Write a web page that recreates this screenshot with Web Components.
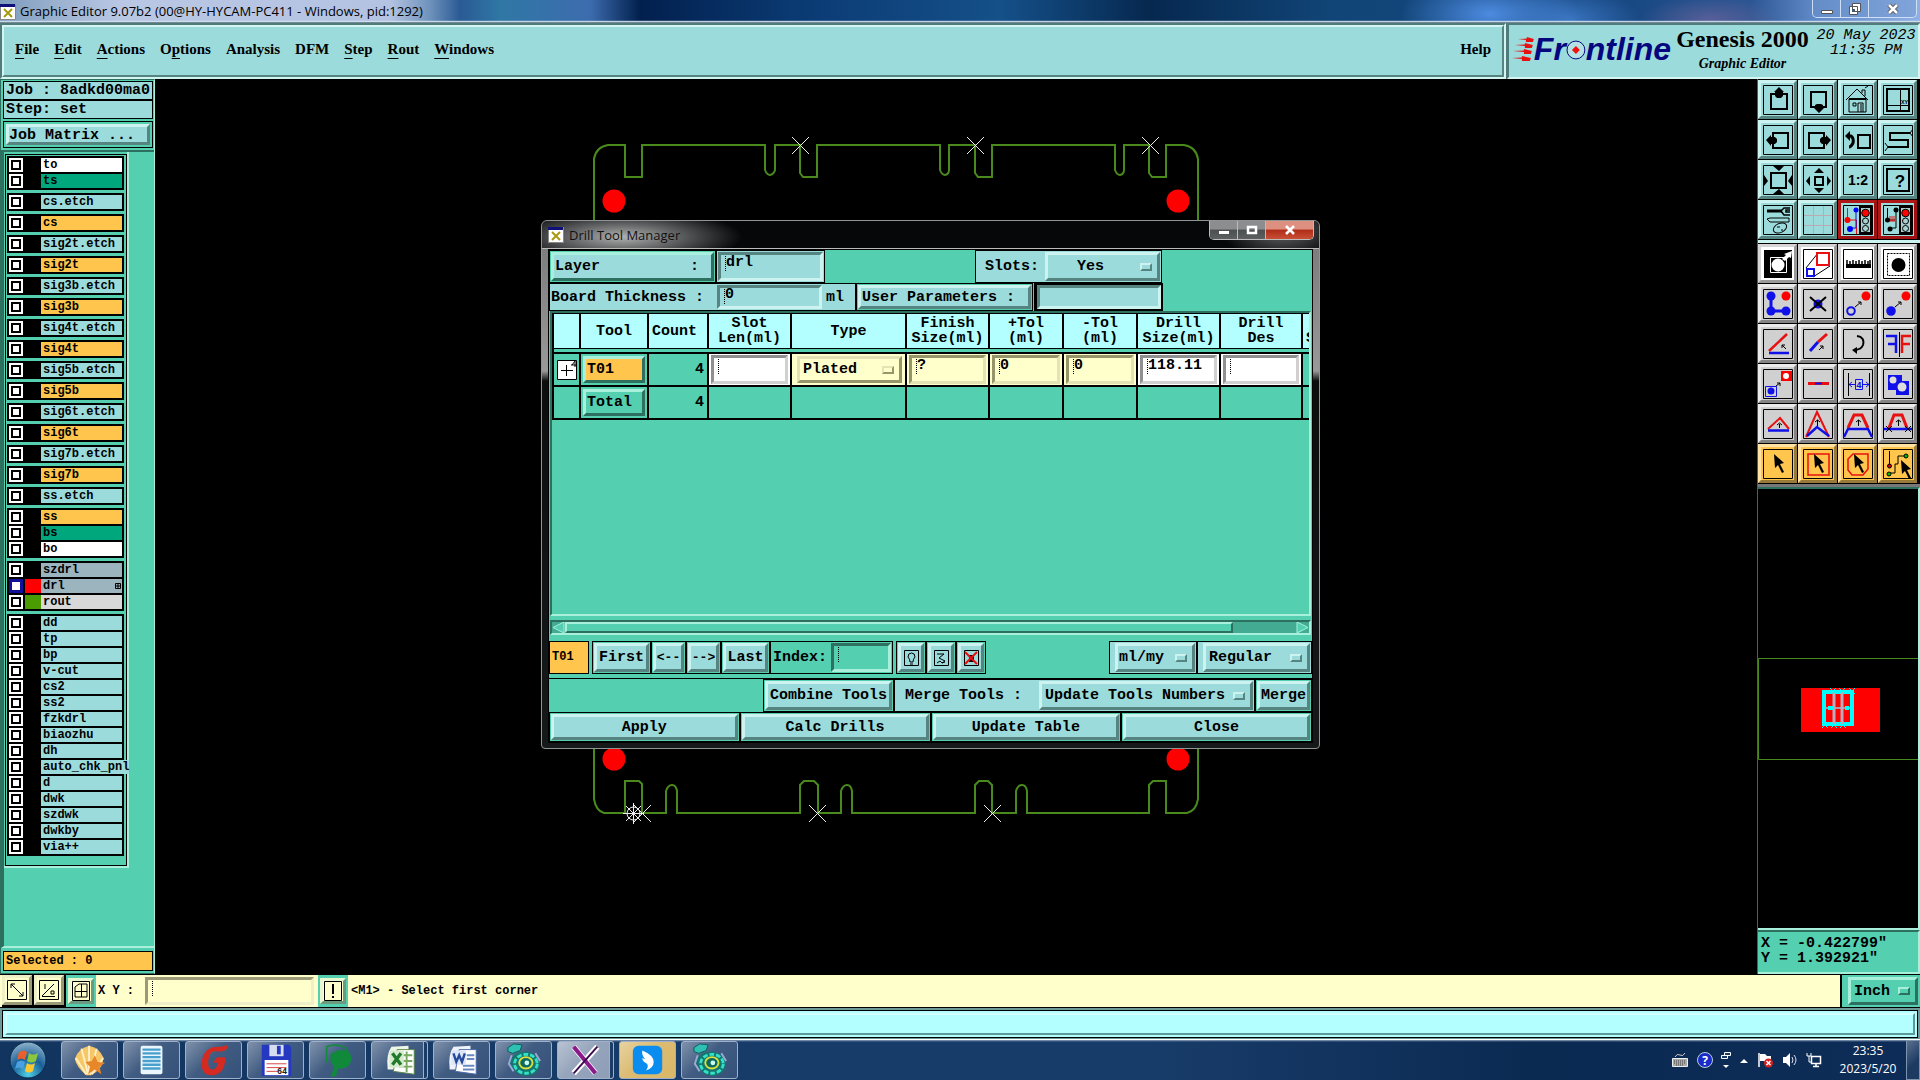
<!DOCTYPE html>
<html lang="en">
<head>
<meta charset="utf-8">
<title>Graphic Editor</title>
<style>
html, body { margin: 0; height: 100%; background: #000; overflow: hidden; }
body { font-family: "Liberation Mono", monospace; color: #000; }
</style>
</head>
<body>
<genesis-app></genesis-app>
<script>
const BASE = `
*, *::before, *::after { box-sizing: border-box; }
:host { display: block; }
svg { display: block; }
button, input, select { font: inherit; color: inherit; margin: 0; border-radius: 0; outline: 0; }
`;
function define(tag, css, html) {
  customElements.define(tag, class extends HTMLElement {
    constructor() {
      super();
      const t = document.createElement('template');
      t.innerHTML = '<style>' + BASE + css + '</style>' + (typeof html === 'function' ? html(this) : html);
      this.attachShadow({ mode: 'open' }).append(t.content.cloneNode(true));
    }
  });
}
const at = (el, n, d = '') => el.getAttribute(n) ?? d;

/* ---------- basic controls ---------- */
define('mo-button', `
:host { font-weight: bold; font-size: 15px; }
button { display: block; width: 100%; height: 100%; padding: 0 var(--pad, 4px); white-space: nowrap; overflow: hidden;
  text-align: var(--align, center); background: var(--face, #9cdbdb); border: 3px solid;
  border-color: var(--hi, #cdf3f1) var(--lo, #568481) var(--lo, #568481) var(--hi, #cdf3f1); }
`, el => `<button type="button" aria-label="${at(el, 'label', el.textContent.trim())}"><slot></slot></button>`);

define('mo-field', `
:host { display: flex; align-items: center; font-weight: bold; font-size: 15px; }
label { white-space: nowrap; }
input { flex: 1; min-width: 0; width: 100%; height: 100%; padding: 0 0 var(--drop, 9px) 5px; border: 3px solid;
  border-color: var(--lo, #568481) var(--hi, #cdf3f1) var(--hi, #cdf3f1) var(--lo, #568481);
  background: var(--caret, repeating-linear-gradient(#000 0 1px, transparent 1px 2px)) no-repeat 4px 1px / 1px 16px, var(--face, #9cdbdb); }
`, el => `<label for="f"><slot></slot></label><input id="f" type="text" ${el.hasAttribute('name') ? `aria-label="${at(el, 'name')}"` : ''} value="${at(el, 'value')}">`);

define('mo-select', `
:host { position: relative; font-weight: bold; font-size: 15px; }
select { display: block; appearance: none; width: 100%; height: 100%; padding: 0 0 0 var(--pad, 4px); border: 3px solid; background: var(--face, #9cdbdb);
  border-color: var(--hi, #cdf3f1) var(--lo, #568481) var(--lo, #568481) var(--hi, #cdf3f1); }
i { position: absolute; right: 8px; top: calc(50% - 4px); width: 12px; height: 8px; border: 2px solid; pointer-events: none;
  border-color: var(--hi, #cdf3f1) var(--lo, #568481) var(--lo, #568481) var(--hi, #cdf3f1); }
`, el => `<select aria-label="${at(el, 'name')}"><option>${at(el, 'value')}</option></select><i></i>`);

/* ---------- title bar ---------- */
const XICON = `<svg width="16" height="16" viewBox="0 0 16 16"><path d="M.5.5h15v15H.5z" fill="#fff" stroke="#888"/><path d="M0 0h15v3H0z" fill="#10107a"/><path d="M4 5l8 8M12 5l-8 8" stroke="#a89a10" stroke-width="2"/></svg>`;
define('app-title', `
:host { display: flex; align-items: center; height: 23px; gap: 4px; font: 13px "Open Sans", sans-serif;
 background: linear-gradient(#fff0 88%, #cfe2ee 94%, #456 100%), radial-gradient(ellipse 90px 40px at 1490px 14px, #4d8be0, #4d8be000), radial-gradient(ellipse 70px 34px at 1570px 20px, #4d8be0aa, #4d8be000), radial-gradient(ellipse 70px 24px at 1710px 20px, #73669eaa, #73669e00), linear-gradient(90deg, #7f9dbd 0, #b9c7e4 120px, #b4c3e2 390px, #6e92bb 430px, #2a5a94 460px, #2f77a5 500px, #3d6cae 590px, #02204e 640px, #0b3a73 800px, #155089 1000px, #06284f 1150px, #114577 1330px, #14457e 1600px, #2a5592 1750px, #5c86c4 1810px, #8fb0e4 100%); }
h1 { flex: 1; margin: 0; font: inherit; color: #000; padding-bottom: 2px; white-space: nowrap; }
div { display: flex; align-self: flex-start; height: 18px; margin-right: 3px; border: 1px solid #cfe0f6; border-top: 0; border-radius: 0 0 5px 5px; overflow: hidden; }
button { width: 28px; padding: 0; border: 0; border-right: 1px solid #cfe0f6; background: #6f95ce66; }
button:last-child { width: 47px; border: 0; } svg { margin: auto; } :host > svg { margin: 0; }
`, `${XICON}<h1>Graphic Editor 9.07b2 (00@HY-HYCAM-PC411 - Windows, pid:1292)</h1>
<div><button aria-label="Minimize"><svg width="14" height="12"><path d="M1.500 7.500h11v3h-11z" fill="#fff" stroke="#555"/></svg></button><button aria-label="Restore"><svg width="14" height="12"><path d="M4.500.5h8v8h-8zM1.500 3.500h8v8h-8z" fill="#fff" stroke="#555"/><path d="M4 6h3v3H4z" fill="#456"/></svg></button><button aria-label="Close"><svg width="14" height="12"><path d="M3 2l8 8M11 2l-8 8" stroke="#555" stroke-width="4.500"/><path d="M3 2l8 8M11 2l-8 8" stroke="#fff" stroke-width="2.500"/></svg></button></div>`);

/* ---------- menu and brand ---------- */
const RIDGE = `border: 2px solid; border-color: #4f7c7a #d5f5f3 #d5f5f3 #4f7c7a;`;
const RIDGE_IN = `border: 2px solid; border-color: #d5f5f3 #568481 #568481 #d5f5f3;`;
define('menu-bar', `
:host { flex: 1; ${RIDGE} background: #9cdbdb; }
nav { display: flex; height: 100%; align-items: center; gap: 15px; padding: 0 11px 4px; ${RIDGE_IN} font: bold 15px "Liberation Serif", serif; }
button { background: none; border: 0; padding: 0; }
button:last-child { margin-left: auto; }
u { text-underline-offset: 4px; text-decoration-thickness: 1px; }
`, `<nav><button><u>F</u>ile</button><button><u>E</u>dit</button><button><u>A</u>ctions</button><button>O<u>p</u>tions</button><button>Analysis</button><button>DFM</button><button><u>S</u>tep</button><button><u>R</u>out</button><button><u>W</u>indows</button><button>Help</button></nav>`);

define('brand-panel', `
:host { display: grid; grid-template-columns: 162px 1fr 104px; width: 413px; ${RIDGE} background: #9cdbdb; color: #000; }
.logo { display: flex; align-items: center; padding: 0 0 4px 3px; font: italic bold 32px/32px "Liberation Sans", sans-serif; color: #06067e; }
.name { display: flex; flex-direction: column; align-items: center; font: bold 24px/28px "Liberation Serif", serif; white-space: nowrap; }
.name em { font-size: 14px; line-height: 22px; }
.date { font: italic 15px/15px "Liberation Mono", monospace; text-align: center; padding-top: 3px; white-space: nowrap; }
`, `<div class="logo"><svg width="22" height="26" viewBox="0 0 22 26"><g fill="#e81010"><path d="M6 3l9-.5V1l7 2-1 3h-7V4z"/><path d="M3 9l10-.5V7l8 2-1 3h-7v-2z"/><path d="M1 15l11-.5V13l8 2-1 3h-7v-2z"/><path d="M0 22l10-.5V20l9 2-1 3H10v-2z"/></g></svg>Fr<svg width="20" height="24" viewBox="0 0 20 24"><circle cx="10" cy="13" r="9" fill="#b4e2e4" stroke="#06067e"/><path d="M10 9l4 4-4 4-4-4z" fill="#f01010"/></svg>ntline</div>
<div class="name"><span>Genesis 2000</span><em>Graphic Editor</em></div>
<div class="date">20 May 2023<br>11:35 PM</div>`);

/* ---------- layer panel ---------- */
define('layer-row', `
:host { display: grid; grid-template-columns: 14px 16px 1fr; column-gap: 2px; height: 16px; padding: 1px 0 1px 1px; background: #000; font: bold 12px/14px "Liberation Mono", monospace; }
input { appearance: none; width: 14px; height: 14px; border: 2px solid var(--box, #fff); background: #fff; box-shadow: inset 0 0 0 2px #000; }
:host([active]) input { box-shadow: inset 0 0 0 1px #10109a; --box: #10109a; }
span { background: var(--swatch, #000); }
label { background: var(--face); padding-left: 2px; margin: 0 1px 0 -2px; white-space: nowrap; }
svg { float: right; margin: 4px 1px 0; }
`, el => `<input type="checkbox" id="c"><span></span><label for="c">${at(el, 'name')}${el.hasAttribute('active') ? '<svg width="6" height="6"><path d="M.5.500h5v5h-5zM3 0v6M0 3h6" fill="none" stroke="#000"/></svg>' : ''}</label>`);
const C = { w: '#fff', g: '#00a67c', c: '#9cdbdb', o: '#ffc54c', s: '#9cb4bd', l: '#d8d8d8' };
const GROUPS = ['to:w ts:g', 'cs.etch:c', 'cs:o', 'sig2t.etch:c', 'sig2t:o', 'sig3b.etch:c', 'sig3b:o', 'sig4t.etch:c', 'sig4t:o', 'sig5b.etch:c', 'sig5b:o', 'sig6t.etch:c', 'sig6t:o', 'sig7b.etch:c', 'sig7b:o', 'ss.etch:c', 'ss:o bs:g bo:w', 'szdrl:s drl:s rout:l', 'dd:c tp:c bp:c v-cut:c cs2:c ss2:c fzkdrl:c biaozhu:c dh:c auto_chk_pnl:c d:c dwk:c szdwk:c dwkby:c via++:c'];
const SW = { drl: '--swatch:#f00', rout: '--swatch:#4a9c00' };
define('layer-panel', `
:host { display: flex; flex-direction: column; width: 155px; height: 895px; background: #54cfb0; font-weight: bold; font-size: 15px; border: 1px solid #2d7060; border-right-color: #a8f0dc; padding: 1px 1px 2px 2px; }
.box { border: 1px solid #000; background: #9cdbdb; height: 19px; line-height: 18px; padding-left: 2px; white-space: nowrap; }
.matrix { border: 1px solid #000; height: 27px; margin: 2px 0; padding: 2px; --align: left; --pad: 0; }
mo-button { height: 100%; }
.scroll { flex: 1; display: flex; border-top: 2px solid #2d7060; border-bottom: 2px solid #a8f0dc; margin: 0 -1px 3px -2px; border-left: 3px solid #2d7060; }
.list { align-self: flex-start; width: 125px; border: solid #a8f0dc; border-width: 0 2px 2px 0; padding: 2px 0 0 1px; }
.frame { border: 1px solid #000; padding: 1px 2px 6px 1px; }
.group { border: 1px solid #000; margin-bottom: 3px; }
.sel { background: #ffc54c; font-size: 12px; height: 20px; }
`, `<div class="box">Job : 8adkd00ma0</div><div class="box">Step: set</div>
<div class="matrix"><mo-button>Job Matrix ...</mo-button></div>
<div class="scroll"><div class="list"><div class="frame">${GROUPS.map(g => '<div class="group">' + g.split(' ').map(r => { const [n, c] = r.split(':'); return `<layer-row name="${n}" ${n === 'drl' ? 'active' : ''} style="--face:${C[c]};${SW[n] || ''}"></layer-row>`; }).join('') + '</div>').join('')}</div></div></div>
<div class="box sel">Selected : 0</div>`);

/* ---------- tool palette ---------- */
const K = 'fill="none" stroke="#000"', R = 'fill="none" stroke="#e81010"', B = 'fill="none" stroke="#1010e8"';
const F = `<path d="M.5.500h29v29H.5z" ${K}/>`;
const CUR = '<path d="M11 5l10 9-4 1 4 8-2 1-4-8-3 3z"/>';
const sarrow = (a, b, c, d) => `<path d="M${a} ${b}L${c} ${d}M${c - 3} ${d}h3v3" ${K}/>`;
const ICONS = [
 ['Pan up', F + `<path d="M8 9h16v15H8z" ${K} stroke-width="2"/><path d="M16 2l5 5h-1v4l-2 2h-4l-2-2V7h-1z"/>`],
 ['Pan down', F + `<path d="M8 7h15v15H8z" ${K} stroke-width="2"/><path d="M16 28l5-5h-1v-3l-2-1h-4l-2 1v3h-1z"/>`],
 ['Home', F + `<path d="M3 15L14 4l11 11M6 14v13h17V14zM19 8V5h3v6M10 18h3v3h-3zM15 27v-9h5v9M18 19v8M22 3l3-2" ${K}/><path d="M6 14h17" ${K} stroke-width="2"/>`],
 ['Origin', F + `<path d="M4 4h22v22H4z" ${K} stroke-width="2"/><path d="M17.500 4v22M4 20.500h22" ${K}/><text x="18" y="19" font-size="6" font-weight="bold">XY</text>`],
 ['Pan left', F + `<path d="M10 8h15v15H10z" ${K} stroke-width="2"/><path d="M3 15l5-5v2h4l2 2v3l-2 2H8v2z"/>`],
 ['Pan right', F + `<path d="M6 8h15v15H6z" ${K} stroke-width="2"/><path d="M28 15l-5-5v2h-4l-2 2v3l2 2h4v2z"/>`],
 ['Previous view', F + `<path d="M15 10h12v13H15z" ${K} stroke-width="2"/><path d="M4 11h4q3 2 2 7-2 4-4 4" ${K} stroke-width="3"/><path d="M2 11l5-5v10z"/>`],
 ['Snake', F + `<path d="M27 8H7v7h18v7H5" ${K} stroke-width="2"/><path d="M30 4l-3 4 3 4M2 18l3 4-3 4" ${K}/>`],
 ['Zoom in', F + `<path d="M8 8h15v15H8z" ${K} stroke-width="2"/><path d="M10 1h11l-5 5zM10 29h11l-5-5zM1 10v11l4-5zM29 10v11l-4-5z"/>`],
 ['Zoom out', F + `<path d="M12 12h8v8h-8z" ${K} stroke-width="2"/><path d="M11 8l5-5 5 5zM11 23l5 5 5-5zM7 11v10l-4-5zM24 11v10l4-5z"/>`],
 ['Scale', F + `<text x="15" y="20" font-size="14" font-weight="bold" font-family="Liberation Sans" text-anchor="middle">1:2</text>`],
 ['Help', F + `<path d="M4 4h22v22H4z" ${K} stroke-width="2"/><text x="17" y="22" font-size="17" font-weight="bold" font-family="Liberation Sans" text-anchor="middle">?</text>`],
 ['Tools', F + `<path d="M4 6h15" ${K} stroke-width="3"/><path d="M27 3h-6l-3 3 3 4h6M27 5h-4v2h4" ${K} stroke-width="1.500"/><path d="M4 14l3-1h19v4H7z" ${K}/><ellipse cx="17" cy="23" rx="7" ry="4.500" ${K} transform="rotate(-25 17 23)"/><path d="M14 22h3M18 25h2" ${K}/>`],
 ['Grid', F + `<path d="M10.500 1v28M20.500 1v28M1 10.500h28M1 20.500h28" fill="none" stroke="#b9aab4"/>`],
 ['Connections red', F + `<path d="M4.500 3v12h9v14" ${R}/><path d="M13 5v18H7" ${B}/><circle cx="4.500" cy="15" r="3" fill="#f00"/><circle cx="13" cy="5" r="2.500" fill="#00f"/><circle cx="7" cy="24" r="3" fill="#00f"/><path d="M17 2h11v26H17z" fill="#a9cfcf" stroke="#000" stroke-width="2"/><circle cx="22.500" cy="8" r="3.800" fill="#f00" stroke="#000"/><circle cx="22.500" cy="16" r="3" ${K}/><circle cx="22.500" cy="23.500" r="3" ${K}/>`, 'red'],
 ['Connections black', F + `<path d="M4.500 3v12M13 5v18H7M4 15h8" ${K}/><path d="M7 11v5M9 11v5M11 11v5M7 16h5" ${R}/><circle cx="4.500" cy="15" r="2.500"/><circle cx="13" cy="5" r="2.500"/><circle cx="7" cy="24" r="2.500"/><path d="M17 2h11v26H17z" fill="#a9cfcf" stroke="#000" stroke-width="2"/><circle cx="22.500" cy="8" r="3.800" fill="#f00" stroke="#000"/><circle cx="22.500" cy="16" r="3" ${K}/><circle cx="22.500" cy="23.500" r="3" ${K}/>`, 'red'],
 ['Select feature', `<path d="M1 1h28v28H1z"/><path d="M7.500 8.500h16v15h-16z" fill="none" stroke="#fff"/><circle cx="15" cy="16" r="6.500" fill="#fff"/><path d="M19 10l4-4-2-1 8-3-1 7-2-1-4 4z" fill="#fff"/>`, 'white'],
 ['Scale feature', F + `<path d="M3 19L15 4M10 28l17-11" ${K}/><path d="M14 4h12v12H14z" ${R} stroke-width="2"/><path d="M4 20h7v7H4z" ${B} stroke-width="2"/>`, 'white'],
 ['Measure', F + `<path d="M3 15h25v4H3z"/><path d="M4 11v5M7 12v3M10 11v5M13 12v3M16 11v5M19 12v3M22 11v5M25 12v3M27 11v5" ${K} stroke-width="1.500"/>`, 'white'],
 ['Select region', F + `<path d="M4.500 4.500h22v22h-22z" ${K} stroke-dasharray="2 1"/><circle cx="15.500" cy="16" r="7"/>`, 'white'],
 ['Add line', F + `<path d="M8 7v15h15" ${B} stroke-width="3"/><g fill="#1010e8"><circle cx="8" cy="7" r="4.500"/><circle cx="8" cy="22" r="4.500"/><circle cx="23" cy="22" r="4.500"/></g><circle cx="23" cy="7" r="4.500" fill="#f00"/>`],
 ['Delete', F + `<circle cx="15" cy="15" r="4.500" fill="#1010e8"/><path d="M7 8l16 14M23 8L7 22" ${K} stroke-width="2"/>`],
 ['Move', F + `<circle cx="8" cy="22" r="3.800" ${B} stroke-width="2"/><circle cx="23" cy="7" r="4.500" fill="#f00"/>` + sarrow(12, 18, 18, 13)],
 ['Copy', F + `<circle cx="8" cy="22" r="4.800" fill="#1010e8"/><circle cx="23" cy="7" r="4.500" fill="#f00"/>` + sarrow(12, 18, 18, 13)],
 ['Angle', F + `<path d="M6 22L24 5" ${R} stroke-width="2.500"/><path d="M6 24h20" ${B} stroke-width="2.500"/><path d="M23 20l-4-4M22 16h-3v3" ${K}/>`],
 ['Stretch', F + `<path d="M15 13l9-8" ${R} stroke-width="3"/><path d="M7 22l8-9" ${B} stroke-width="3"/>` + sarrow(16, 21, 20, 17)],
 ['Rotate', F + `<path d="M14 7q8 1 6 9-2 5-9 5" ${K} stroke-width="2"/><path d="M9 21l5-3v7z"/>`],
 ['Mirror', F + `<path d="M3 7h10v17M5 15h8" ${B} stroke-width="2.500"/><path d="M16.500 3v25" ${K}/><path d="M28 7h-9v17M27 15h-8" ${R} stroke-width="2.500"/>`],
 ['Transform', F + `<path d="M18 2h11v10H18z" fill="#f00"/><circle cx="23" cy="7" r="3" fill="#fff"/><path d="M2.500 17.500h11v10h-11z" ${B}/><circle cx="8" cy="22" r="3.500" fill="#1010e8"/>` + sarrow(13, 17, 17, 14)],
 ['Break', F + `<path d="M5 14.500h21" ${R} stroke-width="3"/><path d="M12 14.500h7" ${B} stroke-width="2"/>`],
 ['Spacing', F + `<path d="M5.500 4v23M26.500 4v23" ${K}/><path d="M6 15.500h6M19 15.500h7M9 13l-3 2.500 3 2.500M23 13l3 2.500-3 2.500M12.500 10.500h7v10h-7z" ${B}/><text x="16" y="19" font-size="9" fill="#1010e8" text-anchor="middle">4</text>`],
 ['Surface', F + `<path d="M5 6h14v6h7v14H13v-5H5z" fill="#1010e8"/><circle cx="10" cy="11" r="3.500" fill="#ddd"/><circle cx="19" cy="18" r="4.500" fill="#ddd"/>`],
 ['Slide one', F + `<path d="M5 20L17 9l9 11" ${R} stroke-width="2"/><path d="M5 21.500h21" ${B} stroke-width="2.500"/><path d="M16.500 19v-4M14 16l2.500-2 2.500 2" ${K}/>`],
 ['Slide two', F + `<path d="M3 28L14 3l12 25" ${R} stroke-width="2"/><path d="M4 27l10-9 12 9" ${B} stroke-width="2.500"/><path d="M14.500 17v-6M12 13l2.500-2 2.500 2" ${K}/>`],
 ['Slide three', F + `<path d="M5 19l6-13h8l6 13" ${R} stroke-width="3"/><path d="M1 28l4-8h20l4 8" ${B} stroke-width="2.500"/><path d="M15.500 17v-6M13 13l2.500-2 2.500 2" ${K}/>`],
 ['Slide four', F + `<path d="M6 19l5-13h8l5 13" ${R} stroke-width="3"/><path d="M1 20h28" ${B} stroke-width="2.500"/><path d="M15.500 17v-6M13 13l2.500-2 2.500 2M3 17l6 6M9 17l-6 6M22 17l6 6M28 17l-6 6" ${K}/>`],
 ['Single select', F + CUR, 'orange'],
 ['Frame select', F + `<path d="M5 5h21v21H5z" ${R} stroke-width="1.500"/>` + CUR, 'orange'],
 ['Polygon select', F + `<path d="M10 5h15v15l-5 6H9l-4-5V10z" ${R} stroke-width="1.500"/>` + CUR, 'orange'],
 ['Net select', F + `<path d="M6.500 2v14M6 24h6v-9h3V7h8" ${K}/><circle cx="6.500" cy="17" r="2" fill="#c00" stroke="#000"/><circle cx="6" cy="25" r="2" fill="#0b0" stroke="#000"/><circle cx="23" cy="7" r="2" fill="#0b0" stroke="#000"/><g transform="translate(7 6)">${CUR}</g>`, 'orange'],
];
define('tool-palette', `
:host { display: grid; grid-template-columns: repeat(4, 39px); grid-auto-rows: 39px; gap: 1px; padding: 1px 0; background: #000; border-bottom: 3px solid var(--edge, #cdf3f1); }
mo-button { --pad: 0; }
.red { --hi: #b01818; --lo: #a01010; } .white { --face: #fff; --hi: #d6d6d6; --lo: #9a9a9a; }
.grey { --face: #d0d0d0; --hi: #ebebeb; --lo: #848484; } .orange { --face: #ffc54c; --hi: #ffe3a5; --lo: #9a7a38; }
svg { width: 30px; height: 30px; margin: auto; }
`, el => {
  const [a, b] = at(el, 'range').split('-').map(Number);
  return ICONS.slice(a, b).map(([n, s, c]) => `<mo-button label="${n}" class="${c || (a ? 'grey' : 'cyan')}"><svg viewBox="0 0 30 30">${s}</svg></mo-button>`).join('');
});
define('side-panel', `
:host { display: flex; flex-direction: column; width: 163px; height: 895px; border-left: 1px solid #2d7060; }
.map { flex: 1; min-height: 0; border: solid; border-width: 2px 2px 2px 0; border-color: #2d7060 #a8f0dc #a8f0dc; }
.map svg { width: 100%; height: 100%; }
.xy { height: 44px; padding: 4px 0 0 3px; font: bold 15px/15px "Liberation Mono", monospace; background: #54cfb0; border: solid; border-width: 2px 2px 2px 0; border-color: #2d7060 #a8f0dc #a8f0dc; white-space: pre; }
`, `<tool-palette range="0-16"></tool-palette><tool-palette range="16-40" style="--edge:#777"></tool-palette>
<div class="map"><svg viewBox="0 2 160 438" preserveAspectRatio="xMinYMin"><path d="M.5 171.500h170M.5 171.500v101h170" fill="none" stroke="#4a8a1c"/><path d="M43 201h79v44H43z" fill="#f00"/><g fill="none" stroke="#0ff"><path d="M66 205h28v32H66z" stroke-width="4"/><path d="M68 221h24" stroke="#a9a" stroke-width="2"/><path d="M76 205v32M84 205v32" stroke="#bab" stroke-width="3"/><path d="M70 221h5M87 221h4" stroke-width="4"/><path d="M72 201l6 6M78 201l-6 6M81 201l6 6M87 201l-6 6M91 201l6 6M97 201l-6 6M64 235l6 6M70 235l-6 6M73 235l6 6M79 235l-6 6M82 235l6 6M88 235l-6 6"/></g></svg></div>
<div class="xy">X = -0.422799"
Y = 1.392921"</div>`);

/* ---------- board drawing ---------- */
const xm = (x, y) => `M${x - 8.500} ${y - 8.500}l17 17M${x + 8.500} ${y - 8.500}l-17 17`;
define('board-canvas', `svg { width: 100%; height: 100%; }`,
`<svg viewBox="155 79 1602 894" preserveAspectRatio="xMinYMin"><g fill="none" stroke="#4a8a1c" stroke-width="2">
<path d="M594 400V159q2-12 14-14h17v32h17v-32h123v25q2 5 5 5 4-1 5-5v-25h25v28l3 4h14v-32h123v25q2 5 5 5 4-1 4-5v-25h26v28l3 4h14v-32h123v25q2 5 5 5 4-1 4-5v-25h25v28l3 4h14v-32h18q12 2 14 14v241"/>
<path d="M594 700v99q2 12 10 14h21v-32h14l3 3v29h24v-22q2-6 6-6 4 0 5 6v22h123v-28l4-4h10l4 4v28h23v-22q2-6 6-6 4 0 5 6v22h123v-28l4-4h9l4 4v28h24v-22q2-6 6-6 4 0 5 6v22h122v-28l4-4h13v32h21q9-2 11-14v-99"/></g>
<g fill="#f00"><circle cx="614" cy="201" r="11.500"/><circle cx="1178" cy="201" r="11.500"/><circle cx="614" cy="759" r="11.500"/><circle cx="1178" cy="759" r="11.500"/></g>
<g fill="none" stroke="#eee"><path d="${xm(800.5, 145.5)}${xm(975.5, 145.5)}${xm(1150.5, 145.5)}${xm(642.5, 813.5)}${xm(817.5, 813.5)}${xm(992.5, 813.5)}"/><circle cx="633.500" cy="813.500" r="6.500"/><path d="M623 813.500h21M633.500 803v21M626 806l15 15M641 806l-15 15"/></g></svg>`);

/* ---------- drill tool manager ---------- */
const bulb = `<svg width="15" height="16" viewBox="0 0 15 16"><path d="M.5.500h14v15H.5z" ${K}/>`;
define('drill-dialog', `
:host { border: 1px solid #8f9494; border-radius: 6px 6px 4px 4px; padding: 0 6px 5px; font-weight: bold; font-size: 15px; background: linear-gradient(#777 0, #999 150px, #0c0e0e 160px, #16191a 100%); color: #000; }
svg { margin: auto; }
header { display: flex; align-items: center; gap: 5px; height: 28px; margin: 0 -6px; padding-left: 6px; font: 13px "Open Sans", sans-serif; background: radial-gradient(ellipse 120px 28px at 80px 16px, #b0b0b0, #a9a9a900), radial-gradient(ellipse 60px 30px at 740px 10px, #666, #6660), #050709; border-bottom: 1px solid #bbb; border-radius: 5px 5px 0 0; color: #111; }
header > svg { margin: 0; }
h2 { font: inherit; margin: 0; flex: 1; }
.wb { display: flex; align-self: flex-start; height: 19px; margin-right: 5px; border: 1px solid #bbb; border-top: 0; border-radius: 0 0 5px 5px; overflow: hidden; }
.wb button { width: 28px; padding: 0; border: 0; border-right: 1px solid #bbb; background: linear-gradient(#8b8d8e 45%, #4c4f50 50%, #5d6061); }
.wb button:last-child { width: 47px; border: 0; background: linear-gradient(#dd8f80 45%, #b02c18 50%, #c85036); }
.client { background: #54cfb0; border: 1px solid #000; }
.row { display: flex; }
.row > * { flex: none; border: 1px solid #000; }
.row > .fill { flex: 1; border: 0; }
.cy { background: #9cdbdb; }
.gr { --face: #54cfb0; --hi: #a8f0dc; --lo: #2d7060; }
.pad { padding: 1px; } .pad > * { height: 100%; } .pad > .lbl { height: auto; }
.ye { --face: #ffffcc; --hi: #e3e3b4; --lo: #96966a; background: #ffffcc; }
.wh { --face: #fff; --hi: #d0d0d0; --lo: #909090; background: #fff; }
.scroller { height: 305px; overflow: hidden; border: 2px solid; border-color: #2d7060 #a8f0dc #a8f0dc #2d7060; margin: 0 1px; }
table { table-layout: fixed; width: 811px; border-spacing: 0; border-left: 2px solid #000; }
th { height: 36px; padding: 0; background: #b3ffff; line-height: 15px; border: solid #000; border-width: 1px 2px 1px 0; font-weight: bold; white-space: nowrap; }
th:nth-child(3) { text-align: left; padding-left: 3px; }
th:last-child { text-align: left; padding-left: 3px; }
tbody::before { content: ""; display: block; height: 3px; }
td { height: 33px; padding: 0; border: 0 solid #000; border-width: 0 2px 2px 0; }
tbody tr:first-child td { border-top-width: 2px; }
td > * { height: 31px; }
td > mo-field { padding: 1px 2px; }
td > .t { height: 27px; margin: 0 2px; --align: left; --pad: 1px; }
td.n { text-align: right; padding-right: 3px; }
.expand { display: block; width: 20px; height: 20px; padding: 0; margin: auto; border: 0; background: none; }
.small { font-size: 13px; }
.bar { display: flex; height: 15px; margin: 4px 1px 6px; background: #43ab91; border: 2px solid; border-color: #2d7060 #a8f0dc #a8f0dc #2d7060; }
.bar svg { margin: 0; }
.bar i { flex: 0 1 668px; border: 2px solid; border-color: #a8f0dc #2d7060 #2d7060 #a8f0dc; background: #54cfb0; }
.bar svg:last-child { margin-left: auto; }
`, `<header>${XICON}<h2>Drill Tool Manager</h2><div class="wb"><button aria-label="Minimize"><svg width="14" height="12"><path d="M2 7h10v3H2z" fill="#fff"/></svg></button><button aria-label="Maximize"><svg width="14" height="12"><path d="M3 3h8v6H3z" fill="none" stroke="#fff" stroke-width="2.500"/></svg></button><button aria-label="Close"><svg width="14" height="12"><path d="M3 2l8 8M11 2l-8 8" stroke="#fff" stroke-width="2.500"/></svg></button></div></header>
<div class="client">
<div class="row" style="height:33px"><div class="pad gr" style="width:167px;--face:#9cdbdb;--align:left;--pad:1px"><mo-button style="white-space:pre">Layer &nbsp; &nbsp; &nbsp; &nbsp; &nbsp;:</mo-button></div><div class="cy pad" style="width:109px"><mo-field name="Layer" value="drl"></mo-field></div><div class="fill" style="flex:0 0 150px"></div><div class="cy pad" style="width:187px;padding-left:9px;display:flex;align-items:center;gap:6px"><span class="lbl">Slots:</span><mo-select name="Slots" value="Yes" style="flex:1;--pad:29px"></mo-select></div></div>
<div class="row" style="height:28px"><div class="cy pad" style="width:307px;display:flex;align-items:center;gap:4px"><mo-field value="0" style="width:271px;--drop:6px"><span style="display:block;width:166px">Board Thickness :</span></mo-field><span class="lbl">ml</span></div><div class="pad" style="width:177px;background:#54cfb0;--align:left;--pad:1px"><mo-button>User Parameters :</mo-button></div><div style="width:130px;border:0;background:#000;padding:2px 2px 2px 3px;border-left:1px solid #54cfb0"><mo-field name="User parameters" value="" style="height:100%;--caret:linear-gradient(#0000,#0000)"></mo-field></div></div>
<div class="scroller"><table><colgroup>${[27, 68, 60, 83, 115, 83, 74, 74, 83, 82, 60].map(w => `<col style="width:${w}px">`).join('')}</colgroup>
<thead><tr><th></th><th>Tool</th><th>Count</th><th>Slot<br>Len(ml)</th><th>Type</th><th>Finish<br>Size(ml)</th><th>+Tol<br>(ml)</th><th>-Tol<br>(ml)</th><th>Drill<br>Size(ml)</th><th>Drill<br>Des</th><th><br>S</th></tr></thead>
<tbody><tr><td><button class="expand" aria-label="Expand"><svg width="20" height="20"><path d="M.5.500h19v19H.5z" fill="#fff" stroke="#000"/><path d="M4 10.500h12M9.500 5v11M14 5h5M15 5l3-4v6" ${K}/></svg></button></td><td><mo-button class="t gr" style="--face:#ffc54c">T01</mo-button></td><td class="n">4</td><td class="wh"><mo-field name="Slot length" value=""></mo-field></td><td class="ye"><mo-select name="Type" value="Plated" style="height:27px;margin:0 3px 0 5px;--pad:3px"></mo-select></td><td class="ye"><mo-field name="Finish size" value="?"></mo-field></td><td class="ye"><mo-field name="Plus tolerance" value="0"></mo-field></td><td class="ye"><mo-field name="Minus tolerance" value="0"></mo-field></td><td class="wh"><mo-field name="Drill size" value="118.11"></mo-field></td><td class="wh"><mo-field name="Drill designator" value=""></mo-field></td><td></td></tr>
<tr><td></td><td><mo-button class="t gr">Total</mo-button></td><td class="n">4</td><td></td><td></td><td></td><td></td><td></td><td></td><td></td><td></td></tr></tbody></table></div>
<div class="bar"><svg width="13" height="11"><path d="M12 0v11L1 5.500z" fill="#54cfb0" stroke="#a8f0dc"/></svg><i></i><svg width="13" height="11"><path d="M1 0v11l11-5.500z" fill="#54cfb0" stroke="#a8f0dc"/></svg></div>
<div class="row" style="height:33px;--pad:0"><div style="width:40px;background:#ffc54c;font-size:12px;line-height:31px;padding-left:2px;margin-right:3px">T01</div><div class="pad" style="width:59px"><mo-button>First</mo-button></div><div class="pad" style="width:35px"><mo-button class="small">&lt;--</mo-button></div><div class="pad" style="width:35px"><mo-button class="small">--&gt;</mo-button></div><div class="pad" style="width:49px"><mo-button>Last</mo-button></div><div class="pad" style="width:123px;margin-right:3px;padding-left:2px"><mo-field class="gr" value="" style="--face:#54cfb0"><span style="display:block;width:58px">Index:</span></mo-field></div><div class="pad" style="width:30px"><mo-button label="Highlight">${bulb}<path d="M6 12q0-3-2-5 0-4 3.500-4t3.500 4q-2 2-2 5zM6 14h3" ${K}/></svg></mo-button></div><div class="pad" style="width:30px"><mo-button label="Graph">${bulb}<path d="M3 4h7l-5 4 6 3-3 2M3 13l3-2 2 2 3-1" ${K}/></svg></mo-button></div><div class="pad" style="width:30px"><mo-button label="Clear highlight">${bulb}<path d="M5 5h5v7H5z"/><path d="M1 2l12 12M13 2L1 14" ${R} stroke-width="2"/></svg></mo-button></div><div class="fill"></div><div class="cy pad" style="width:88px;padding-left:5px"><mo-select name="Units" value="ml/my"  style="--pad:1px"></mo-select></div><div class="cy pad" style="width:115px;padding-left:5px"><mo-select name="Mode" value="Regular" style="--pad:3px"></mo-select></div></div>
<div class="row" style="height:34px;margin-top:4px;border-top:1px solid #000;--pad:0"><div class="fill"></div><div class="pad" style="width:131px"><mo-button>Combine Tools</mo-button></div><div class="cy pad" style="width:361px;padding-left:10px;display:flex;align-items:center;justify-content:space-between"><span class="lbl">Merge Tools :</span><mo-select name="Merge tools" value="Update Tools Numbers" style="width:214px;--pad:3px"></mo-select></div><div class="pad" style="width:57px"><mo-button>Merge</mo-button></div></div>
<div class="row" style="height:30px">${['Apply', 'Calc Drills', 'Update Table', 'Close'].map(t => `<div class="pad" style="flex:1"><mo-button>${t}</mo-button></div>`).join('')}</div>
</div>`);

/* ---------- status ---------- */
define('status-bar', `
:host { display: flex; height: 32px; background: #ffffcc; font-weight: bold; font-size: 12px; align-items: stretch; --face: #ffffcc; --hi: #f0f0c8; --lo: #9a9a78; --pad: 0; }
svg { margin: auto; }
mo-button { width: 32px; border: 1px solid #000; border-width: 0 2px 2px 0; }
mo-button.g { width: 30px; background: #54cfb0; padding: 2px 1px; border: 1px solid #54cfb0; --hi: #e8f8d0; --lo: #6c9a80; }
mo-field { width: 218px; font-size: 12px; padding: 2px 0; --drop: 10px; margin-right: 4px; }
p { flex: 1; margin: 0; padding-left: 3px; line-height: 33px; }
.u { border-left: 2px solid #000; background: #54cfb0; padding: 2px 2px 2px 6px; width: 80px; --face: #54cfb0; --hi: #a8f0dc; --lo: #2d7060; --pad: 3px; }
.u mo-select { height: 100%; }
`, `<mo-button label="Corner" style="margin-left:2px"><svg width="20" height="20"><path d="M.5.500h19v19H.5zM4 4l12 12M4 8V4h4M16 12v4h-4" ${K}/></svg></mo-button><mo-button label="Angle"><svg width="20" height="20"><path d="M.5.500h19v19H.5zM3 16.500h13M3 16L15 4M6 4v5M12 11h3v3h-3z" ${K}/></svg></mo-button><mo-button class="g" label="Grid snap"><svg width="18" height="20"><path d="M.5.500h17v19H.5zM3 6l4-3h8v13H3zM9.500 3v13M3 10.500h12" ${K}/></svg></mo-button><mo-field value=""><span style="display:block;width:49px;padding-left:2px">X Y :</span></mo-field><mo-button class="g" label="Alert"><svg width="18" height="20"><path d="M.5.500h17v19H.5z" ${K}/><path d="M9 3v10M9 15v2" ${K} stroke-width="2"/></svg></mo-button><p>&lt;M1&gt; - Select first corner</p><div class="u"><mo-select name="Measurement unit" value="Inch"></mo-select></div>`);
define('message-bar', `
:host { height: 32px; margin-top: 1px; background: #6c9a98; padding: 2px 2px 1px 2px; border-bottom: 1px solid #fff; }
div { height: 100%; border: 1px solid #000; background: #b3ffff; padding: 2px; }
div::before { content: ""; display: block; height: 100%; border: 2px solid; border-color: #d2ffff #5c9a98 #5c9a98 #d2ffff; }
`, `<div></div>`);

/* ---------- taskbar ---------- */
const eye = `<path d="M2 6l6-4 9 1-2 6-8 3-5-2z" fill="#2fc0b4" stroke="#0b5a58"/><path d="M4 22q1-10 14-12 14 0 18 12-1 13-14 14Q8 35 4 22z" fill="#14766e"/><path d="M6 14l-3 9 5 8M31 12l5 8" stroke="#a0a8d8" stroke-width="2" fill="none"/><ellipse cx="21" cy="23" rx="12" ry="10" fill="none" stroke="#34e0c8" stroke-width="3" stroke-dasharray="5 2"/><ellipse cx="21" cy="22" rx="7" ry="6" fill="#0e6a60" stroke="#d8e040" stroke-width="2"/><circle cx="22" cy="22" r="2.500" fill="#c8fff0"/>`;
const APPS = [
 ['Shell', `<path d="M18 4q10 2 15 12 0 10-8 16l-5 3H15q-10-8-12-17Q6 7 18 4z" fill="#f6c766"/><path d="M18 4v30M10 7l7 27M26 7l-7 27M4 17l11 17M33 17L21 34" stroke="#fff0c8" stroke-width="2"/><path d="M24 14l3 7 8 1-6 4 2 8-7-5-7 5 2-8-5-5 7-1z" fill="#e8862a"/>`],
 ['Notes', `<rect x="7" y="4" width="23" height="30" rx="2" fill="#eaf6fc"/><path d="M9 8h19M9 12h19M9 16h19M9 20h19M9 24h19M9 28h19" stroke="#48a0cc" stroke-width="2.500"/>`],
 ['Red G', `<path d="M34 3q-1 7-8 7H18q-4 2-5 10-1 8 4 9 4 0 5-4l1-3h-5l4-6h9q0 18-14 19Q5 35 6 21 8 7 20 5q8 1 14-2z" fill="#d42a22"/>`],
 ['Floppy', `<path d="M4 3h29l2 3v30H4z" fill="#2438c0"/><path d="M12 3h15v12H12z" fill="#d6def0"/><path d="M20 4h4v9h-4z" fill="#2438c0"/><path d="M7 19h25v16H7z" fill="#fff"/><path d="M9 23h21M9 27h21M9 31h12" stroke="#d04040"/>`],
 ['Green P', `<path fill-rule="evenodd" d="M11 13q10-7 19-3 6 6 1 14-5 5-12 4l-2 8-6 1 4-10-4-7z" fill="#108a3a"/><path d="M7 22V5q10-4 20 1l3 6" stroke="#108a3a" stroke-width="1.500" fill="none"/>`],
 ['Spreadsheet', `<path d="M10 5q-6 8-4 24h22V4z" fill="#eef6ea"/><path d="M16 8h18v26l-22-3z" fill="#fff" stroke="#5a8a48"/><path d="M18 14h14M18 20h14M18 26h14M26 10v22" stroke="#76a860" stroke-width="2"/><path d="M8 9h15v18H8z" fill="#d7ead0"/><path d="M11 12l9 12M20 12l-9 12" stroke="#1f7a2c" stroke-width="3.500"/>`, 1],
 ['Document', `<path d="M10 5q-6 8-4 24h22V4z" fill="#eef2fa"/><path d="M16 8h18v26l-22-3z" fill="#fff" stroke="#4868a8"/><path d="M24 14h8M24 18h8M20 25h12M20 29h12" stroke="#6a88c0" stroke-width="2"/><path d="M8 9h15v15H8z" fill="#dce6f6"/><path d="M10 12l3 9 3-7 3 7 3-9" fill="none" stroke="#254a9c" stroke-width="2.500"/>`],
 ['Viewer one', eye],
 ['X server', `<path d="M6 5l23 28M31 5L6 33" stroke="#fff" stroke-width="6"/><path d="M6 5l23 28" stroke="#8a1a8c" stroke-width="4.500"/><path d="M31 5L6 33" stroke="#3a0a4c" stroke-width="2"/>`, 1, '#8a9ab4'],
 ['Wing', `<rect x="3" y="4" width="31" height="30" rx="6" fill="#0b8df0"/><path d="M13 9q12 5 12 12 0 6-8 9 3-4 1-7-5-2-5-6 2 1 3 1-4-4-3-9z" fill="#fff"/>`, 0, '#d8b462'],
 ['Viewer two', eye],
];
define('task-bar', `
:host { display: flex; height: 40px; align-items: stretch; background: linear-gradient(#8ea2bc, #0000 2px), linear-gradient(90deg, #12355f, #183c69 40%, #183c69 60%, #0b2a52 80%, #0d2c57); color: #fff; font: 12px/18px "Open Sans", sans-serif; }
button { padding: 0; border: 0; background: none; }
.start { width: 56px; margin-right: 5px; }
.app { position: relative; width: 57px; margin: 1px 5px 1px 0; border: 1px solid #9fb0c8; border-radius: 3px; background: linear-gradient(135deg, #ffffff66, #ffffff1a 45%, #ffffff0a), var(--tint, #2c4a74); }
.stack::after { content: ""; position: absolute; right: -1px; top: -1px; width: 5px; height: 38px; border: 1px solid #9fb0c8; border-radius: 0 3px 3px 0; background: #1c3c68; }
svg { margin: auto; }
.tray { margin-left: auto; display: flex; align-items: center; gap: 8px; }
.clock { width: 76px; text-align: center; }
.desk { width: 14px; align-self: stretch; border: 1px solid #7f93ac; background: linear-gradient(135deg, #5a7090, #1c3a62 60%); margin-left: -8px; }
`, `<button class="start" aria-label="Start"><svg width="40" height="40" viewBox="0 0 40 40"><defs><radialGradient id="o" cx=".5" cy=".9" r=".9"><stop offset="0" stop-color="#4fd0e8"/><stop offset=".5" stop-color="#1a5f98"/><stop offset="1" stop-color="#8fb4cc"/></radialGradient></defs><circle cx="20" cy="20" r="18" fill="url(#o)" stroke="#0a2a4a"/><path d="M11 12q5-3 8 0l-2 8q-4-3-8 0z" fill="#e8602c"/><path d="M21 13q4 3 9 0l-2 8q-5 3-9 0z" fill="#8cc63c"/><path d="M9 22q4-3 8 0l-2 7q-4-3-8 0z" fill="#4aa0e0"/><path d="M19 23q4 3 8 0l-2 8q-4 3-8 0z" fill="#fcc832"/></svg></button>
${APPS.map(([n, s, st, tint]) => `<button class="app ${st ? 'stack' : ''}" aria-label="${n}" ${tint ? `style="--tint:${tint}"` : ''}><svg width="36" height="36" viewBox="0 0 38 38">${s}${n === 'Floppy' ? '<text x="20" y="34" font-size="9" font-weight="bold" fill="#222" font-family="Liberation Mono">64</text>' : ''}</svg></button>`).join('')}
<div class="tray"><svg width="18" height="16" viewBox="0 0 18 16"><path d="M4 5q2-4 5-2t5-2" fill="none" stroke="#ccc"/><path d="M1.500 6.500h15v8h-15z" fill="#aaa" stroke="#eee"/><path d="M3 9h12M3 11h12M5 13h8" stroke="#444" stroke-dasharray="1 1"/></svg>
<svg width="16" height="16" viewBox="0 0 16 16"><circle cx="8" cy="8" r="7.500" fill="#1a2ac8" stroke="#bcd"/><text x="8" y="12.500" font-size="12" font-weight="bold" fill="#fff" text-anchor="middle">?</text></svg>
<svg width="10" height="20" viewBox="0 0 10 20"><path d="M3.500 2.500h6v3h-6zM.5 5.500h6v3h-6z" fill="#183c69" stroke="#fff"/><path d="M2 15h6l-3 3z" fill="#fff"/></svg>
<svg width="10" height="8" viewBox="0 0 10 8"><path d="M1 7l4-4 4 4z" fill="#fff"/></svg>
<svg width="17" height="16" viewBox="0 0 17 16"><path d="M2 1v14" stroke="#fff" stroke-width="1.500"/><path d="M3 2h5l2 2h4v7H9L7 9H3z" fill="#fff"/><circle cx="11.500" cy="11" r="4.500" fill="#d42020"/><path d="M9.500 9l4 4M13.500 9l-4 4" stroke="#fff" stroke-width="1.500"/></svg>
<svg width="16" height="16" viewBox="0 0 16 16"><path d="M1 5h3l4-4v14l-4-4H1z" fill="#fff"/><path d="M10 5q2 3 0 6M12 3q4 5 0 10" fill="none" stroke="#dde"/></svg>
<svg width="16" height="16" viewBox="0 0 16 16"><path d="M5.500 4.500h9v7h-9zM7 14.500h6M10 12v2" fill="none" stroke="#fff" stroke-width="1.500"/><path d="M1 1v3h4V1M3 4v6h2" fill="none" stroke="#fff"/></svg>
<div class="clock">23:35<br>2023/5/20</div><button class="desk" aria-label="Show desktop"></button></div>`);

/* ---------- application ---------- */
define('genesis-app', `
:host { display: flex; flex-direction: column; height: 100vh; }
.top { display: flex; height: 56px; gap: 1px; background: #4f7c7a; flex: none; }
.work { flex: 1; min-height: 0; display: flex; justify-content: space-between; padding-bottom: 2px; }
.stage { flex: 1; position: relative; min-width: 0; }
board-canvas { height: 100%; }
drill-dialog { position: absolute; left: 386px; top: 141px; width: 779px; }
`, `<app-title></app-title>
<div class="top"><menu-bar></menu-bar><brand-panel></brand-panel></div>
<div class="work"><layer-panel></layer-panel><div class="stage"><board-canvas></board-canvas><drill-dialog></drill-dialog></div><side-panel></side-panel></div>
<status-bar></status-bar><message-bar></message-bar><task-bar></task-bar>`);
</script>
</body>
</html>
